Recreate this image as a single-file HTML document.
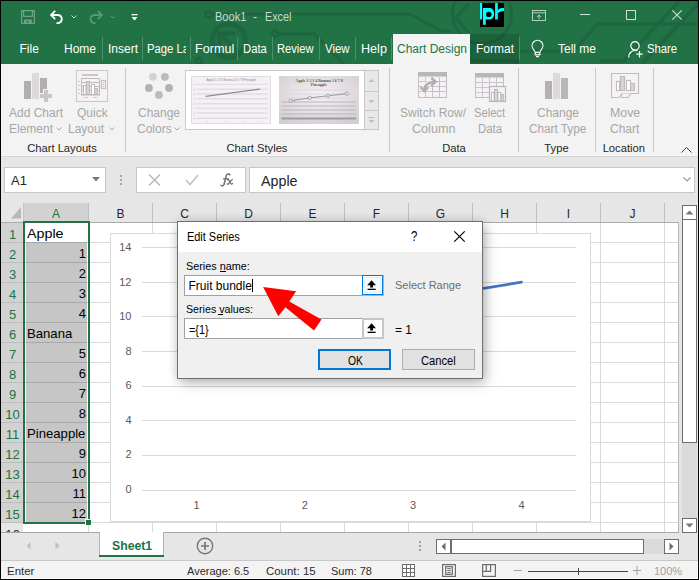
<!DOCTYPE html>
<html><head><meta charset="utf-8">
<style>
*{margin:0;padding:0;box-sizing:border-box}
html,body{width:699px;height:580px;overflow:hidden;background:#000;font-family:"Liberation Sans",sans-serif}
.a{position:absolute}
.t{position:absolute;white-space:nowrap;line-height:1}
svg{position:absolute;overflow:visible}
</style></head><body>
<div class="a" style="left:1px;top:1px;width:697px;height:63px;background:#217346;"></div>
<svg style="left:0px;top:0px" width="699" height="64" viewBox="0 0 699 64"><defs><clipPath id="tc"><rect x="1" y="1" width="697" height="63"/></clipPath></defs><g fill="none" stroke="#1e6640" stroke-width="3" clip-path="url(#tc)">
<circle cx="208.7" cy="14.3" r="3.3"/>
<path d="M212 14 H410 L441 31 H452"/>
<circle cx="228.8" cy="40.6" r="16.7" stroke-width="5"/>
<path d="M219.5 45 V33.5 H235" stroke-width="4"/>
<path d="M223 37 L241 55" stroke-width="4"/>
<circle cx="275" cy="34" r="3"/>
<path d="M278 34 H314 L344 64"/>
<circle cx="482" cy="14" r="29.5"/>
<path d="M468 4 L456 18 L468 32"/>
<path d="M699 24 H597 L574 51 H520"/>
<path d="M679.5 1 L623.5 61 H600" stroke-width="3.5"/>
<path d="M701 1 L641.5 64" stroke-width="4"/>
<circle cx="199" cy="61" r="3"/>
</g></svg>
<svg style="left:21px;top:10px" width="14" height="14" viewBox="0 0 14 14"><g fill="none" stroke="#6aa283" stroke-width="1.3"><rect x="0.65" y="0.65" width="12.7" height="12.7"/><path d="M2.6 1 V6.3 H11.4 V1"/></g><path d="M3 13.5 V9.5 H10.8 V13.5 H7.3 V11 H5.7 V13.5 Z" fill="#6aa283"/></svg>
<svg style="left:49px;top:9px" width="17" height="15" viewBox="0 0 17 15"><g fill="none" stroke="#fff" stroke-width="1.8"><path d="M2.5 6 H9.5 A4.2 4.2 0 0 1 9.5 14.2 H7.5"/><path d="M6.2 1.8 L2 6 L6.2 10.2"/></g></svg>
<svg style="left:71px;top:15px" width="6" height="4" viewBox="0 0 6 4"><path d="M0.5 0.5 L3 3 L5.5 0.5" fill="none" stroke="#c8dccf" stroke-width="1"/></svg>
<svg style="left:87px;top:9px" width="17" height="15" viewBox="0 0 17 15"><g fill="none" stroke="#5a9676" stroke-width="1.8"><path d="M14.5 6 H6.8 A4.2 4.2 0 0 0 6.8 14.2 H8.5"/><path d="M10.8 1.8 L15 6 L10.8 10.2"/></g></svg>
<svg style="left:110px;top:15px" width="6" height="4" viewBox="0 0 6 4"><path d="M0.5 0.5 L3 3 L5.5 0.5" fill="none" stroke="#5a9676" stroke-width="1"/></svg>
<svg style="left:131px;top:14px" width="7" height="7" viewBox="0 0 7 7"><rect x="0.5" y="0" width="6" height="1.3" fill="#fff"/><path d="M0.5 3 H6.5 L3.5 6.5 Z" fill="#fff"/></svg>
<div class="t" style="left:215px;top:11px;font-size:12px;color:#c5dacd;transform:scaleX(0.92);transform-origin:0 0;">Book1</div>
<div class="t" style="left:253px;top:11px;font-size:12px;color:#c5dacd;">-</div>
<div class="t" style="left:264.5px;top:11px;font-size:12px;color:#c5dacd;transform:scaleX(0.9);transform-origin:0 0;">Excel</div>
<svg style="left:480px;top:3px" width="24" height="24" viewBox="0 0 24 24"><defs><clipPath id="lc"><rect width="24" height="24"/></clipPath></defs>
<rect width="24" height="24" fill="#000"/>
<g fill="#00ffff" clip-path="url(#lc)"><rect x="0" y="0" width="2.2" height="16.5"/>
<path d="M3 5 H9.5 C12.5 5 14.1 7.5 14.1 10.8 C14.1 14.2 12.5 16.6 9.5 16.6 H5.8 V21.8 H3 Z M6.1 11.4 A2.7 2.6 0 1 0 11.5 11.4 A2.7 2.6 0 1 0 6.1 11.4 Z" fill-rule="evenodd"/>
<rect x="15.1" y="0" width="2.7" height="16.5"/>
<path d="M17.6 7.4 C19 5.6 21 5 23 5 L25 5 L25 8.2 C23 7.8 20 8.4 17.6 10.6 Z"/></g></svg>
<svg style="left:532px;top:10px" width="14" height="11" viewBox="0 0 14 11"><g fill="none" stroke="#b5cfbf" stroke-width="1"><rect x="0.5" y="0.5" width="13" height="10"/><path d="M0.5 2.8 H13.5"/><path d="M7 9 V5 M5 7 L7 5 L9 7"/></g></svg>
<div class="a" style="left:580px;top:14px;width:10px;height:1px;background:#cfe0d5;"></div>
<svg style="left:626px;top:10px" width="10" height="10" viewBox="0 0 10 10"><rect x="0.5" y="0.5" width="9" height="9" fill="none" stroke="#cfe0d5" stroke-width="1"/></svg>
<svg style="left:672px;top:10px" width="10" height="10" viewBox="0 0 10 10"><path d="M0.3 0.3 L9.7 9.7 M9.7 0.3 L0.3 9.7" fill="none" stroke="#cfe0d5" stroke-width="1.1"/></svg>
<div class="a" style="left:147px;top:43px;width:39px;height:16px;overflow:hidden"><div class="t" style="left:0;top:0;font-size:12px;color:#fff;transform:scaleX(0.94);transform-origin:0 0">Page La</div></div>
<div class="t" style="left:19.5px;top:43px;font-size:12px;color:#fff;">File</div>
<div class="t" style="left:64px;top:43px;font-size:12px;color:#fff;">Home</div>
<div class="t" style="left:108px;top:43px;font-size:12px;color:#fff;">Insert</div>
<div class="t" style="left:195px;top:43px;font-size:12px;color:#fff;transform:scaleX(1.05);transform-origin:0 0;">Formul</div>
<div class="t" style="left:243px;top:43px;font-size:12px;color:#fff;transform:scaleX(0.94);transform-origin:0 0;">Data</div>
<div class="t" style="left:277px;top:43px;font-size:12px;color:#fff;transform:scaleX(0.93);transform-origin:0 0;">Review</div>
<div class="t" style="left:325px;top:43px;font-size:12px;color:#fff;transform:scaleX(0.95);transform-origin:0 0;">View</div>
<div class="t" style="left:361px;top:43px;font-size:12px;color:#fff;transform:scaleX(1.05);transform-origin:0 0;">Help</div>
<div class="a" style="left:102px;top:37px;width:1px;height:23px;background:#4e8f6b;"></div>
<div class="a" style="left:142px;top:37px;width:1px;height:23px;background:#4e8f6b;"></div>
<div class="a" style="left:190px;top:37px;width:1px;height:23px;background:#4e8f6b;"></div>
<div class="a" style="left:237px;top:37px;width:1px;height:23px;background:#4e8f6b;"></div>
<div class="a" style="left:272px;top:37px;width:1px;height:23px;background:#4e8f6b;"></div>
<div class="a" style="left:319px;top:37px;width:1px;height:23px;background:#4e8f6b;"></div>
<div class="a" style="left:355px;top:37px;width:1px;height:23px;background:#4e8f6b;"></div>
<div class="a" style="left:391px;top:37px;width:1px;height:23px;background:#4e8f6b;"></div>
<div class="a" style="left:393px;top:34px;width:77px;height:30px;background:#f3f3f3;"></div>
<div class="t" style="left:397px;top:43px;font-size:12px;color:#217346;">Chart Design</div>
<div class="a" style="left:470px;top:34px;width:49px;height:30px;background:#1c633c;"></div>
<svg style="left:0px;top:0px" width="699" height="64" viewBox="0 0 699 64"><defs><clipPath id="fc"><rect x="470" y="34" width="49" height="30"/></clipPath></defs><g clip-path="url(#fc)" fill="none" stroke="#195935" stroke-width="3"><circle cx="482" cy="14" r="29.5"/><path d="M470 61 H519" stroke-width="4"/></g></svg>
<div class="t" style="left:476px;top:43px;font-size:12px;color:#fff;">Format</div>
<div class="a" style="left:519px;top:37px;width:1px;height:23px;background:#4e8f6b;"></div>
<svg style="left:531px;top:41px" width="13" height="17" viewBox="0 0 13 17"><g fill="none" stroke="#fff" stroke-width="1.2"><path d="M4 10.8 L2.2 8 A5.4 5.4 0 1 1 10.8 8 L9 10.8"/><rect x="4.2" y="11.3" width="4.6" height="2.5"/><path d="M5 15.6 H8"/></g></svg>
<div class="t" style="left:558px;top:43px;font-size:12px;color:#fff;">Tell me</div>
<svg style="left:628px;top:41px" width="16" height="17" viewBox="0 0 16 17"><g fill="none" stroke="#fff" stroke-width="1.2"><circle cx="7" cy="4.8" r="4.2"/><path d="M0.8 16.5 A6.5 6.5 0 0 1 9.5 9.8"/><path d="M11.5 10 V16.5 M8.3 13.2 H14.7"/></g></svg>
<div class="t" style="left:647px;top:43px;font-size:12px;color:#fff;transform:scaleX(0.94);transform-origin:0 0;">Share</div>
<div class="a" style="left:1px;top:64px;width:697px;height:92px;background:#f3f3f3;"></div>
<div class="a" style="left:1px;top:155px;width:697px;height:1px;background:#f6f6f6;"></div>
<svg style="left:24px;top:73px" width="30" height="30" viewBox="0 0 30 30"><rect x="0" y="8" width="7" height="18" fill="#b1afb1"/><rect x="8" y="0" width="7" height="26" fill="#dcd8dc"/>
<rect x="16" y="5" width="7" height="11" fill="#b1afb1"/><rect x="16" y="16" width="3" height="4" fill="#b1afb1"/>
<rect x="20" y="17" width="4" height="12" fill="#c6c6c6"/><rect x="16" y="21" width="12" height="4" fill="#c6c6c6"/></svg>
<div class="t" style="left:9px;top:107px;font-size:12px;color:#a6a6a6;">Add Chart</div>
<div class="t" style="left:9px;top:123px;font-size:12px;color:#a6a6a6;">Element</div>
<svg style="left:56px;top:127px" width="6" height="4" viewBox="0 0 6 4"><path d="M0.5 0.5 L3 3 L5.5 0.5" fill="none" stroke="#a6a6a6" stroke-width="1"/></svg>
<svg style="left:76px;top:70px" width="32" height="32" viewBox="0 0 32 32"><rect x="0.5" y="0.5" width="31" height="31" fill="#f5f1f5" stroke="#cbc7cb"/>
<rect x="6" y="4" width="16" height="2" fill="#c8c8c8"/>
<g fill="none" stroke="#bdb9bd" stroke-width="1"><path d="M5.5 8.5 H23.5 V24.5 H5.5 Z"/><path d="M5.5 12.5 H23.5 M5.5 16.5 H23.5 M5.5 20.5 H23.5"/></g>
<rect x="5" y="24" width="19" height="1.5" fill="#bdb9bd"/>
<rect x="7.5" y="15.5" width="2.5" height="9" fill="#fff" stroke="#bdb9bd"/>
<rect x="10.5" y="11.5" width="3" height="13" fill="#d6d2d6" stroke="#bdb9bd"/>
<rect x="15.5" y="14.5" width="3" height="10" fill="#fff" stroke="#bdb9bd"/>
<rect x="18.5" y="18.5" width="3" height="6" fill="#d6d2d6" stroke="#bdb9bd"/>
<rect x="25.5" y="10.5" width="4" height="8" fill="#f5f1f5" stroke="#c2bec2" stroke-width="1.2"/>
<g fill="#c2bec2"><rect x="27" y="12" width="1" height="1"/><rect x="27" y="14" width="1" height="1"/><rect x="27" y="16" width="1" height="1"/></g>
<g stroke="#cdc9cd"><path d="M2 11.5 H4 M2 15.5 H4 M2 19.5 H4 M2 23.5 H4 M8 27.5 H12 M17 27.5 H21"/></g></svg>
<div class="t" style="left:77px;top:107px;font-size:12px;color:#a6a6a6;">Quick</div>
<div class="t" style="left:68px;top:123px;font-size:12px;color:#a6a6a6;">Layout</div>
<svg style="left:108.5px;top:127px" width="6" height="4" viewBox="0 0 6 4"><path d="M0.5 0.5 L3 3 L5.5 0.5" fill="none" stroke="#a6a6a6" stroke-width="1"/></svg>
<div class="t" style="left:2.0px;width:120px;text-align:center;top:143px;font-size:11.2px;color:#262626;">Chart Layouts</div>
<div class="a" style="left:125px;top:68px;width:1px;height:84px;background:#c8c8c8;"></div>
<svg style="left:140px;top:68px" width="34" height="32" viewBox="0 0 34 32"><circle cx="12.9" cy="8.8" r="3.9" fill="#d4d0d4"/><circle cx="24.9" cy="8.8" r="3.9" fill="#bdbbbd"/>
<circle cx="8.9" cy="19.9" r="3.9" fill="#b2b0b2"/><circle cx="29" cy="19.9" r="3.9" fill="#b2b0b2"/>
<circle cx="18.9" cy="26.9" r="3.9" fill="#bdbbbd"/></svg>
<div class="t" style="left:138px;top:107px;font-size:12px;color:#a6a6a6;">Change</div>
<div class="t" style="left:137px;top:123px;font-size:12px;color:#a6a6a6;">Colors</div>
<svg style="left:174px;top:127px" width="6" height="4" viewBox="0 0 6 4"><path d="M0.5 0.5 L3 3 L5.5 0.5" fill="none" stroke="#a6a6a6" stroke-width="1"/></svg>
<div class="a" style="left:185px;top:70px;width:180px;height:60px;background:#fff;border:1px solid #c8c8c8;"></div>
<svg style="left:191px;top:76px" width="80" height="48" viewBox="0 0 80 48"><rect x="0.5" y="0.5" width="79" height="47" fill="#f5f0f5" stroke="#e2dce2"/>
<text x="15.6" y="5" font-size="3" font-family="Liberation Sans" fill="#8a848a" textLength="49.4" lengthAdjust="spacingAndGlyphs">Apple 1 2 3 4 Banana 5 6 7 8 Pineapple</text>
<g stroke="#e3dde3" stroke-width="1.4"><path d="M5.7 8.4 H77 M5.7 13.2 H77 M5.7 18 H77 M5.7 22.8 H77 M5.7 27.8 H77 M5.7 32.2 H77 M5.7 37 H77 M5.7 42.3 H77"/></g>
<g fill="#d8d2d8"><rect x="2.5" y="8" width="2" height="1"/><rect x="2.5" y="12.8" width="2" height="1"/><rect x="2.5" y="17.6" width="2" height="1"/><rect x="2.5" y="22.4" width="2" height="1"/><rect x="2.5" y="27.4" width="2" height="1"/><rect x="2.5" y="31.8" width="2" height="1"/><rect x="2.5" y="36.6" width="2" height="1"/><rect x="2.5" y="41.9" width="2" height="1"/>
<rect x="16" y="45" width="1" height="1"/><rect x="34" y="45" width="1" height="1"/><rect x="52" y="45" width="1" height="1"/><rect x="70" y="45" width="1" height="1"/></g>
<path d="M14.4 20.4 L69 13.1" stroke="#8c8c8c" stroke-width="1.3"/></svg>
<svg style="left:279px;top:76px" width="80" height="48" viewBox="0 0 80 48"><defs><radialGradient id="g2" cx="50%" cy="40%" r="70%"><stop offset="0" stop-color="#f5f2f5"/><stop offset="1" stop-color="#d2cdd2"/></radialGradient></defs>
<rect width="80" height="48" fill="url(#g2)"/>
<text x="16.6" y="6" font-size="3.6" font-family="Liberation Serif" font-weight="bold" fill="#5a555a" textLength="47" lengthAdjust="spacingAndGlyphs">Apple 1 2 3 4 Banana 5 6 7 8</text>
<text x="31.8" y="10" font-size="3.6" font-family="Liberation Serif" font-weight="bold" fill="#5a555a" textLength="16.2" lengthAdjust="spacingAndGlyphs">Pineapple</text>
<g stroke="#dcd7dc" stroke-width="1"><path d="M2.5 14 H77 M2.5 18.2 H77 M2.5 22.3 H77"/></g>
<g stroke="#bcb6bc" stroke-width="1.2"><path d="M2.5 26 H77 M2.5 30 H77 M2.5 34 H77 M2.5 38 H77"/></g>
<path d="M2.5 42.5 H77" stroke="#a09aa0" stroke-width="2"/>
<path d="M11.8 24.8 L30.7 21.8 L49 19.8 L67.9 17.6" stroke="#9a9a9a" stroke-width="1" fill="none"/>
<g fill="#f2f2f2" stroke="#8f8f8f" stroke-width="0.8"><circle cx="11.8" cy="24.8" r="1.6"/><circle cx="30.7" cy="21.8" r="1.6"/><circle cx="49" cy="19.8" r="1.6"/><circle cx="67.9" cy="17.6" r="1.6"/></g></svg>
<div class="a" style="left:364px;top:70px;width:15px;height:60px;background:#e8e8e8;border:1px solid #c8c8c8;"></div>
<div class="a" style="left:364px;top:91px;width:15px;height:1px;background:#c8c8c8;"></div>
<div class="a" style="left:364px;top:110px;width:15px;height:1px;background:#c8c8c8;"></div>
<svg style="left:364px;top:70px" width="15" height="60" viewBox="0 0 15 60"><path d="M4.5 12 L7.5 9 L10.5 12 Z" fill="#bdbdbd"/>
<path d="M4.5 30 L7.5 33 L10.5 30 Z" fill="#bdbdbd"/>
<path d="M4.5 47.5 H10.5" stroke="#bdbdbd"/><path d="M4.5 50 L7.5 53 L10.5 50 Z" fill="#bdbdbd"/></svg>
<div class="t" style="left:197.0px;width:120px;text-align:center;top:143px;font-size:11.2px;color:#262626;">Chart Styles</div>
<div class="a" style="left:389px;top:68px;width:1px;height:84px;background:#c8c8c8;"></div>
<svg style="left:418px;top:72px" width="30" height="27" viewBox="0 0 30 27"><rect x="0.5" y="0.5" width="28" height="25" fill="#f5f1f5" stroke="#c0bec0"/>
<rect x="0" y="0" width="29" height="4.5" fill="#b8b6b8"/>
<g stroke="#c8c6c8"><path d="M0.5 9.5 H28.5 M0.5 14.5 H28.5 M0.5 19.5 H28.5 M7.5 4.5 V25.5 M14.5 4.5 V25.5 M21.5 4.5 V25.5"/></g>
<rect x="14.5" y="9.5" width="7" height="10" fill="none" stroke="#bdbbbd"/>
<path d="M6.4 17.5 A10.1 7.8 0 0 1 16.5 9.7" fill="none" stroke="#f5f1f5" stroke-width="5"/>
<path d="M6.4 17.5 A10.1 7.8 0 0 1 16.5 9.7" fill="none" stroke="#b0aeb0" stroke-width="2.6"/>
<path d="M13.2 5.8 L17.6 9.7 L13.2 13.6" fill="none" stroke="#b0aeb0" stroke-width="2.4"/>
<path d="M2.6 15.2 L6.4 19 L10.2 15.2" fill="none" stroke="#b0aeb0" stroke-width="2.4"/></svg>
<div class="t" style="left:400px;top:107px;font-size:12px;color:#a6a6a6;">Switch Row/</div>
<div class="t" style="left:412px;top:123px;font-size:12px;color:#a6a6a6;transform:scaleX(1.05);transform-origin:0 0;">Column</div>
<svg style="left:475px;top:73px" width="31" height="29" viewBox="0 0 31 29"><rect x="0.5" y="0.5" width="28" height="24" fill="#f5f1f5" stroke="#c0bec0"/>
<rect x="0" y="0" width="29" height="4.5" fill="#b8b6b8"/>
<g stroke="#c8c6c8"><path d="M0.5 9.5 H28.5 M0.5 14.5 H28.5 M0.5 19.5 H28.5 M7.5 4.5 V24.5 M14.5 4.5 V24.5 M21.5 4.5 V24.5"/></g>
<rect x="14.5" y="13.5" width="16" height="15" fill="#f5f1f5" stroke="#b8b6b8" stroke-width="1.2"/>
<rect x="16.5" y="19.5" width="2.5" height="8.5" fill="#fff" stroke="#b8b6b8" stroke-width="0.9"/>
<rect x="19.5" y="16.5" width="3" height="11.5" fill="#d8d4d8" stroke="#b8b6b8" stroke-width="0.9"/>
<rect x="23" y="19.5" width="2.6" height="8.5" fill="#fff" stroke="#b8b6b8" stroke-width="0.9"/>
<rect x="26" y="21.5" width="2.6" height="6.5" fill="#d8d4d8" stroke="#b8b6b8" stroke-width="0.9"/></svg>
<div class="t" style="left:474px;top:107px;font-size:12px;color:#a6a6a6;transform:scaleX(0.93);transform-origin:0 0;">Select</div>
<div class="t" style="left:478px;top:123px;font-size:12px;color:#a6a6a6;transform:scaleX(0.95);transform-origin:0 0;">Data</div>
<div class="t" style="left:394.0px;width:120px;text-align:center;top:143px;font-size:11.2px;color:#262626;">Data</div>
<div class="a" style="left:518px;top:68px;width:1px;height:84px;background:#c8c8c8;"></div>
<svg style="left:545px;top:73px" width="24" height="26" viewBox="0 0 24 26"><rect x="0" y="8" width="7" height="18" fill="#b3b1b3"/><rect x="8" y="0" width="7" height="26" fill="#dcd8dc"/><rect x="16" y="5" width="7" height="21" fill="#b8b6b8"/></svg>
<div class="t" style="left:537px;top:107px;font-size:12px;color:#a6a6a6;">Change</div>
<div class="t" style="left:529px;top:123px;font-size:12px;color:#a6a6a6;transform:scaleX(0.98);transform-origin:0 0;">Chart Type</div>
<div class="t" style="left:496.5px;width:120px;text-align:center;top:143px;font-size:11.2px;color:#262626;">Type</div>
<div class="a" style="left:595px;top:68px;width:1px;height:84px;background:#c8c8c8;"></div>
<svg style="left:611px;top:73px" width="29" height="26" viewBox="0 0 29 26"><path d="M0.5 0.5 H27.5 V20.5 H11 L8.2 24.5 H0.5 Z" fill="#f5f1f5" stroke="#c0bec0" stroke-width="1.1"/>
<path d="M11 20.5 L10.5 24.5 H17 L20 20.5" fill="#f5f1f5" stroke="#c0bec0" stroke-width="1.1"/>
<rect x="5.5" y="8.5" width="3" height="9" fill="#fff" stroke="#bdb9bd" stroke-width="1.1"/>
<rect x="9.5" y="3.5" width="4" height="14" fill="#d8d4d8" stroke="#bdb9bd" stroke-width="1.1"/>
<rect x="15.5" y="7.5" width="4" height="10" fill="#fff" stroke="#bdb9bd" stroke-width="1.1"/>
<rect x="19.5" y="10.5" width="4" height="7" fill="#d8d4d8" stroke="#bdb9bd" stroke-width="1.1"/></svg>
<div class="t" style="left:610px;top:107px;font-size:12px;color:#a6a6a6;transform:scaleX(1.03);transform-origin:0 0;">Move</div>
<div class="t" style="left:610px;top:123px;font-size:12px;color:#a6a6a6;">Chart</div>
<div class="t" style="left:563.8px;width:120px;text-align:center;top:143px;font-size:11.2px;color:#262626;">Location</div>
<div class="a" style="left:653px;top:68px;width:1px;height:84px;background:#c8c8c8;"></div>
<svg style="left:681px;top:147px" width="11" height="6" viewBox="0 0 11 6"><path d="M0.5 5.5 L5.5 0.5 L10.5 5.5" fill="none" stroke="#444" stroke-width="1"/></svg>
<div class="a" style="left:1px;top:157px;width:697px;height:46px;background:#e6e6e6;"></div>
<div class="a" style="left:1px;top:156px;width:697px;height:1px;background:#d4d4d4;"></div>
<div class="a" style="left:4px;top:167px;width:102px;height:26px;background:#fff;border:1px solid #c6c6c6;"></div>
<div class="t" style="left:11px;top:174px;font-size:13px;color:#262626;">A1</div>
<svg style="left:92px;top:177px" width="8" height="5" viewBox="0 0 8 5"><path d="M0 0 H8 L4 4.5 Z" fill="#777"/></svg>
<svg style="left:120px;top:175px" width="2" height="10" viewBox="0 0 2 10"><g fill="#a8a8a8"><rect x="0" y="0" width="2" height="2"/><rect x="0" y="4" width="2" height="2"/><rect x="0" y="8" width="2" height="2"/></g></svg>
<div class="a" style="left:136px;top:167px;width:110px;height:26px;background:#fff;border:1px solid #c6c6c6;"></div>
<svg style="left:148px;top:174px" width="13" height="12" viewBox="0 0 13 12"><path d="M1 0.5 L12 11.5 M12 0.5 L1 11.5" stroke="#b4b4b4" stroke-width="1.3"/></svg>
<svg style="left:185px;top:174px" width="14" height="12" viewBox="0 0 14 12"><path d="M1 6 L5 10.5 L13 1" fill="none" stroke="#c2c2c2" stroke-width="1.6"/></svg>
<svg style="left:219px;top:172px" width="16" height="16" viewBox="0 0 16 16"><g fill="none" stroke="#707070" stroke-linecap="round"><path d="M11 2.8 C10 1.6 7.6 1.5 7 4.5 L5 12.5 C4.5 14 3 14.3 2 13.3" stroke-width="1.5"/><path d="M4.3 6.8 H9.5" stroke-width="1.2"/><path d="M8.5 7.5 C9.5 7.3 10 8 10.5 9 L11.8 11.5 C12.3 12.3 12.8 12.3 13.5 11.5" stroke-width="1.3"/><path d="M13.3 7.5 C12.5 7.8 11 10 9.5 11.8 C9 12.3 8.5 12.3 8 12" stroke-width="1.3"/></g></svg>
<div class="a" style="left:249px;top:167px;width:446px;height:26px;background:#fff;border:1px solid #c6c6c6;"></div>
<div class="t" style="left:261px;top:174px;font-size:14px;color:#262626;transform:scaleX(1.02);transform-origin:0 0;">Apple</div>
<svg style="left:683px;top:177px" width="8" height="5" viewBox="0 0 8 5"><path d="M0.5 0.5 L4 4 L7.5 0.5" fill="none" stroke="#999" stroke-width="1.2"/></svg>
<div class="a" style="left:1px;top:203px;width:697px;height:330px;background:#fff;"></div>
<div class="a" style="left:1px;top:203px;width:678px;height:19px;background:#e6e6e6;"></div>
<div class="a" style="left:24px;top:203px;width:64px;height:18px;background:#d2d2d2;"></div>
<div class="a" style="left:1px;top:222px;width:678px;height:1px;background:#ababab;"></div>
<svg style="left:11px;top:207px" width="11" height="12" viewBox="0 0 11 12"><path d="M10 0 V11.5 H0 Z" fill="#b8b8b8"/></svg>
<div class="a" style="left:23px;top:203px;width:1px;height:19px;background:#c6c6c6;"></div>
<div class="a" style="left:88px;top:203px;width:1px;height:19px;background:#c0c0c0;"></div>
<div class="t" style="left:36.0px;width:40px;text-align:center;top:208px;font-size:12px;color:#217346;">A</div>
<div class="a" style="left:152px;top:203px;width:1px;height:19px;background:#c0c0c0;"></div>
<div class="t" style="left:100.5px;width:40px;text-align:center;top:208px;font-size:12px;color:#262626;">B</div>
<div class="a" style="left:216px;top:203px;width:1px;height:19px;background:#c0c0c0;"></div>
<div class="t" style="left:164.5px;width:40px;text-align:center;top:208px;font-size:12px;color:#262626;">C</div>
<div class="a" style="left:280px;top:203px;width:1px;height:19px;background:#c0c0c0;"></div>
<div class="t" style="left:228.5px;width:40px;text-align:center;top:208px;font-size:12px;color:#262626;">D</div>
<div class="a" style="left:344px;top:203px;width:1px;height:19px;background:#c0c0c0;"></div>
<div class="t" style="left:292.5px;width:40px;text-align:center;top:208px;font-size:12px;color:#262626;">E</div>
<div class="a" style="left:408px;top:203px;width:1px;height:19px;background:#c0c0c0;"></div>
<div class="t" style="left:356.5px;width:40px;text-align:center;top:208px;font-size:12px;color:#262626;">F</div>
<div class="a" style="left:472px;top:203px;width:1px;height:19px;background:#c0c0c0;"></div>
<div class="t" style="left:420.5px;width:40px;text-align:center;top:208px;font-size:12px;color:#262626;">G</div>
<div class="a" style="left:536px;top:203px;width:1px;height:19px;background:#c0c0c0;"></div>
<div class="t" style="left:484.5px;width:40px;text-align:center;top:208px;font-size:12px;color:#262626;">H</div>
<div class="a" style="left:600px;top:203px;width:1px;height:19px;background:#c0c0c0;"></div>
<div class="t" style="left:548.5px;width:40px;text-align:center;top:208px;font-size:12px;color:#262626;">I</div>
<div class="a" style="left:664px;top:203px;width:1px;height:19px;background:#c0c0c0;"></div>
<div class="t" style="left:612.5px;width:40px;text-align:center;top:208px;font-size:12px;color:#262626;">J</div>
<div class="a" style="left:1px;top:223px;width:22px;height:310px;background:#e6e6e6;"></div>
<div class="a" style="left:1px;top:223px;width:22px;height:300px;background:#d2d2d2;"></div>
<div class="a" style="left:1px;top:242px;width:22px;height:1px;background:#bdbdbd;"></div>
<div class="t" style="left:-2.5px;width:30px;text-align:center;top:228px;font-size:13px;color:#217346;">1</div>
<div class="a" style="left:1px;top:262px;width:22px;height:1px;background:#bdbdbd;"></div>
<div class="t" style="left:-2.5px;width:30px;text-align:center;top:248px;font-size:13px;color:#217346;">2</div>
<div class="a" style="left:1px;top:282px;width:22px;height:1px;background:#bdbdbd;"></div>
<div class="t" style="left:-2.5px;width:30px;text-align:center;top:268px;font-size:13px;color:#217346;">3</div>
<div class="a" style="left:1px;top:302px;width:22px;height:1px;background:#bdbdbd;"></div>
<div class="t" style="left:-2.5px;width:30px;text-align:center;top:288px;font-size:13px;color:#217346;">4</div>
<div class="a" style="left:1px;top:322px;width:22px;height:1px;background:#bdbdbd;"></div>
<div class="t" style="left:-2.5px;width:30px;text-align:center;top:308px;font-size:13px;color:#217346;">5</div>
<div class="a" style="left:1px;top:342px;width:22px;height:1px;background:#bdbdbd;"></div>
<div class="t" style="left:-2.5px;width:30px;text-align:center;top:328px;font-size:13px;color:#217346;">6</div>
<div class="a" style="left:1px;top:362px;width:22px;height:1px;background:#bdbdbd;"></div>
<div class="t" style="left:-2.5px;width:30px;text-align:center;top:348px;font-size:13px;color:#217346;">7</div>
<div class="a" style="left:1px;top:382px;width:22px;height:1px;background:#bdbdbd;"></div>
<div class="t" style="left:-2.5px;width:30px;text-align:center;top:368px;font-size:13px;color:#217346;">8</div>
<div class="a" style="left:1px;top:402px;width:22px;height:1px;background:#bdbdbd;"></div>
<div class="t" style="left:-2.5px;width:30px;text-align:center;top:388px;font-size:13px;color:#217346;">9</div>
<div class="a" style="left:1px;top:422px;width:22px;height:1px;background:#bdbdbd;"></div>
<div class="t" style="left:-2.5px;width:30px;text-align:center;top:408px;font-size:13px;color:#217346;">10</div>
<div class="a" style="left:1px;top:442px;width:22px;height:1px;background:#bdbdbd;"></div>
<div class="t" style="left:-2.5px;width:30px;text-align:center;top:428px;font-size:13px;color:#217346;">11</div>
<div class="a" style="left:1px;top:462px;width:22px;height:1px;background:#bdbdbd;"></div>
<div class="t" style="left:-2.5px;width:30px;text-align:center;top:448px;font-size:13px;color:#217346;">12</div>
<div class="a" style="left:1px;top:482px;width:22px;height:1px;background:#bdbdbd;"></div>
<div class="t" style="left:-2.5px;width:30px;text-align:center;top:468px;font-size:13px;color:#217346;">13</div>
<div class="a" style="left:1px;top:502px;width:22px;height:1px;background:#bdbdbd;"></div>
<div class="t" style="left:-2.5px;width:30px;text-align:center;top:488px;font-size:13px;color:#217346;">14</div>
<div class="a" style="left:1px;top:522px;width:22px;height:1px;background:#bdbdbd;"></div>
<div class="t" style="left:-2.5px;width:30px;text-align:center;top:508px;font-size:13px;color:#217346;">15</div>
<div class="a" style="left:1px;top:542px;width:22px;height:1px;background:#bdbdbd;"></div>
<div class="t" style="left:-2.5px;width:30px;text-align:center;top:528px;font-size:13px;color:#262626;">16</div>
<div class="a" style="left:24px;top:242px;width:654px;height:1px;background:#dadada;"></div>
<div class="a" style="left:24px;top:262px;width:654px;height:1px;background:#dadada;"></div>
<div class="a" style="left:24px;top:282px;width:654px;height:1px;background:#dadada;"></div>
<div class="a" style="left:24px;top:302px;width:654px;height:1px;background:#dadada;"></div>
<div class="a" style="left:24px;top:322px;width:654px;height:1px;background:#dadada;"></div>
<div class="a" style="left:24px;top:342px;width:654px;height:1px;background:#dadada;"></div>
<div class="a" style="left:24px;top:362px;width:654px;height:1px;background:#dadada;"></div>
<div class="a" style="left:24px;top:382px;width:654px;height:1px;background:#dadada;"></div>
<div class="a" style="left:24px;top:402px;width:654px;height:1px;background:#dadada;"></div>
<div class="a" style="left:24px;top:422px;width:654px;height:1px;background:#dadada;"></div>
<div class="a" style="left:24px;top:442px;width:654px;height:1px;background:#dadada;"></div>
<div class="a" style="left:24px;top:462px;width:654px;height:1px;background:#dadada;"></div>
<div class="a" style="left:24px;top:482px;width:654px;height:1px;background:#dadada;"></div>
<div class="a" style="left:24px;top:502px;width:654px;height:1px;background:#dadada;"></div>
<div class="a" style="left:24px;top:522px;width:654px;height:1px;background:#dadada;"></div>
<div class="a" style="left:24px;top:542px;width:654px;height:1px;background:#dadada;"></div>
<div class="a" style="left:88px;top:223px;width:1px;height:310px;background:#dadada;"></div>
<div class="a" style="left:152px;top:223px;width:1px;height:310px;background:#dadada;"></div>
<div class="a" style="left:216px;top:223px;width:1px;height:310px;background:#dadada;"></div>
<div class="a" style="left:280px;top:223px;width:1px;height:310px;background:#dadada;"></div>
<div class="a" style="left:344px;top:223px;width:1px;height:310px;background:#dadada;"></div>
<div class="a" style="left:408px;top:223px;width:1px;height:310px;background:#dadada;"></div>
<div class="a" style="left:472px;top:223px;width:1px;height:310px;background:#dadada;"></div>
<div class="a" style="left:536px;top:223px;width:1px;height:310px;background:#dadada;"></div>
<div class="a" style="left:600px;top:223px;width:1px;height:310px;background:#dadada;"></div>
<div class="a" style="left:664px;top:223px;width:1px;height:310px;background:#dadada;"></div>
<div class="a" style="left:26px;top:242px;width:61px;height:1px;background:#a8a8a8;"></div>
<div class="a" style="left:26px;top:243px;width:61px;height:19px;background:#c6c6c6;"></div>
<div class="a" style="left:26px;top:262px;width:61px;height:1px;background:#a8a8a8;"></div>
<div class="a" style="left:26px;top:263px;width:61px;height:19px;background:#c6c6c6;"></div>
<div class="a" style="left:26px;top:282px;width:61px;height:1px;background:#a8a8a8;"></div>
<div class="a" style="left:26px;top:283px;width:61px;height:19px;background:#c6c6c6;"></div>
<div class="a" style="left:26px;top:302px;width:61px;height:1px;background:#a8a8a8;"></div>
<div class="a" style="left:26px;top:303px;width:61px;height:19px;background:#c6c6c6;"></div>
<div class="a" style="left:26px;top:322px;width:61px;height:1px;background:#a8a8a8;"></div>
<div class="a" style="left:26px;top:323px;width:61px;height:19px;background:#c6c6c6;"></div>
<div class="a" style="left:26px;top:342px;width:61px;height:1px;background:#a8a8a8;"></div>
<div class="a" style="left:26px;top:343px;width:61px;height:19px;background:#c6c6c6;"></div>
<div class="a" style="left:26px;top:362px;width:61px;height:1px;background:#a8a8a8;"></div>
<div class="a" style="left:26px;top:363px;width:61px;height:19px;background:#c6c6c6;"></div>
<div class="a" style="left:26px;top:382px;width:61px;height:1px;background:#a8a8a8;"></div>
<div class="a" style="left:26px;top:383px;width:61px;height:19px;background:#c6c6c6;"></div>
<div class="a" style="left:26px;top:402px;width:61px;height:1px;background:#a8a8a8;"></div>
<div class="a" style="left:26px;top:403px;width:61px;height:19px;background:#c6c6c6;"></div>
<div class="a" style="left:26px;top:422px;width:61px;height:1px;background:#a8a8a8;"></div>
<div class="a" style="left:26px;top:423px;width:61px;height:19px;background:#c6c6c6;"></div>
<div class="a" style="left:26px;top:442px;width:61px;height:1px;background:#a8a8a8;"></div>
<div class="a" style="left:26px;top:443px;width:61px;height:19px;background:#c6c6c6;"></div>
<div class="a" style="left:26px;top:462px;width:61px;height:1px;background:#a8a8a8;"></div>
<div class="a" style="left:26px;top:463px;width:61px;height:19px;background:#c6c6c6;"></div>
<div class="a" style="left:26px;top:482px;width:61px;height:1px;background:#a8a8a8;"></div>
<div class="a" style="left:26px;top:483px;width:61px;height:19px;background:#c6c6c6;"></div>
<div class="a" style="left:26px;top:502px;width:61px;height:1px;background:#a8a8a8;"></div>
<div class="a" style="left:26px;top:503px;width:61px;height:19px;background:#c6c6c6;"></div>
<div class="a" style="left:25px;top:223px;width:62px;height:19px;overflow:hidden"><div class="t" style="left:2px;top:4px;font-size:13px;color:#000;transform:scaleX(1.1);transform-origin:0 0">Apple</div></div>
<div class="t" style="left:6px;width:80px;text-align:right;top:247px;font-size:13px;color:#000;">1</div>
<div class="t" style="left:6px;width:80px;text-align:right;top:267px;font-size:13px;color:#000;">2</div>
<div class="t" style="left:6px;width:80px;text-align:right;top:287px;font-size:13px;color:#000;">3</div>
<div class="t" style="left:6px;width:80px;text-align:right;top:307px;font-size:13px;color:#000;">4</div>
<div class="a" style="left:25px;top:323px;width:62px;height:19px;overflow:hidden"><div class="t" style="left:2px;top:4px;font-size:13px;color:#000;transform:scaleX(1.01);transform-origin:0 0">Banana</div></div>
<div class="t" style="left:6px;width:80px;text-align:right;top:347px;font-size:13px;color:#000;">5</div>
<div class="t" style="left:6px;width:80px;text-align:right;top:367px;font-size:13px;color:#000;">6</div>
<div class="t" style="left:6px;width:80px;text-align:right;top:387px;font-size:13px;color:#000;">7</div>
<div class="t" style="left:6px;width:80px;text-align:right;top:407px;font-size:13px;color:#000;">8</div>
<div class="a" style="left:25px;top:423px;width:62px;height:19px;overflow:hidden"><div class="t" style="left:2px;top:4px;font-size:13px;color:#000;transform:scaleX(1.01);transform-origin:0 0">Pineapple</div></div>
<div class="t" style="left:6px;width:80px;text-align:right;top:447px;font-size:13px;color:#000;">9</div>
<div class="t" style="left:6px;width:80px;text-align:right;top:467px;font-size:13px;color:#000;">10</div>
<div class="t" style="left:6px;width:80px;text-align:right;top:487px;font-size:13px;color:#000;">11</div>
<div class="t" style="left:6px;width:80px;text-align:right;top:507px;font-size:13px;color:#000;">12</div>
<div class="a" style="left:23px;top:221px;width:67px;height:303px;background:transparent;border:2px solid #217346;"></div>
<div class="a" style="left:86px;top:520px;width:5px;height:5px;background:#217346;"></div>
<div class="a" style="left:85px;top:519px;width:7px;height:1px;background:#fff;"></div>
<div class="a" style="left:85px;top:519px;width:1px;height:7px;background:#fff;"></div>
<div class="a" style="left:678px;top:203px;width:20px;height:330px;background:#e6e6e6;"></div>
<div class="a" style="left:678px;top:222px;width:1px;height:311px;background:#b4b4b4;"></div>
<div class="a" style="left:682px;top:205px;width:15px;height:15px;background:#fff;border:1px solid #6d6d6d;"></div>
<svg style="left:682px;top:205px" width="15" height="15" viewBox="0 0 15 15"><path d="M3.5 9.5 L7.5 5.5 L11.5 9.5 Z" fill="#777"/></svg>
<div class="a" style="left:682px;top:220px;width:15px;height:299px;background:#dadada;"></div>
<div class="a" style="left:682px;top:219px;width:15px;height:224px;background:#fff;border:1px solid #6d6d6d;"></div>
<div class="a" style="left:682px;top:518px;width:15px;height:15px;background:#fff;border:1px solid #6d6d6d;"></div>
<svg style="left:682px;top:518px" width="15" height="15" viewBox="0 0 15 15"><path d="M3.5 5.5 L7.5 9.5 L11.5 5.5 Z" fill="#777"/></svg>
<div class="a" style="left:110px;top:233px;width:481px;height:289px;background:#fff;border:1px solid #d9d9d9;"></div>
<div class="a" style="left:142px;top:247px;width:434px;height:1px;background:#d9d9d9;"></div>
<div class="t" style="left:101.5px;width:30px;text-align:right;top:242px;font-size:11px;color:#595959;">14</div>
<div class="a" style="left:142px;top:282px;width:434px;height:1px;background:#d9d9d9;"></div>
<div class="t" style="left:101.5px;width:30px;text-align:right;top:277px;font-size:11px;color:#595959;">12</div>
<div class="a" style="left:142px;top:316px;width:434px;height:1px;background:#d9d9d9;"></div>
<div class="t" style="left:101.5px;width:30px;text-align:right;top:311px;font-size:11px;color:#595959;">10</div>
<div class="a" style="left:142px;top:351px;width:434px;height:1px;background:#d9d9d9;"></div>
<div class="t" style="left:101.5px;width:30px;text-align:right;top:346px;font-size:11px;color:#595959;">8</div>
<div class="a" style="left:142px;top:386px;width:434px;height:1px;background:#d9d9d9;"></div>
<div class="t" style="left:101.5px;width:30px;text-align:right;top:380px;font-size:11px;color:#595959;">6</div>
<div class="a" style="left:142px;top:420px;width:434px;height:1px;background:#d9d9d9;"></div>
<div class="t" style="left:101.5px;width:30px;text-align:right;top:415px;font-size:11px;color:#595959;">4</div>
<div class="a" style="left:142px;top:455px;width:434px;height:1px;background:#d9d9d9;"></div>
<div class="t" style="left:101.5px;width:30px;text-align:right;top:449px;font-size:11px;color:#595959;">2</div>
<div class="a" style="left:142px;top:490px;width:434px;height:1px;background:#d9d9d9;"></div>
<div class="t" style="left:101.5px;width:30px;text-align:right;top:484px;font-size:11px;color:#595959;">0</div>
<div class="t" style="left:186.55px;width:20px;text-align:center;top:500px;font-size:11px;color:#595959;">1</div>
<div class="t" style="left:294.85px;width:20px;text-align:center;top:500px;font-size:11px;color:#595959;">2</div>
<div class="t" style="left:403.15px;width:20px;text-align:center;top:500px;font-size:11px;color:#595959;">3</div>
<div class="t" style="left:511.45000000000005px;width:20px;text-align:center;top:500px;font-size:11px;color:#595959;">4</div>
<svg style="left:0px;top:0px" width="699" height="580" viewBox="0 0 699 580"><path d="M196.5 334.3 L304.9 317 L413.2 299.6 L521.5 282.2" fill="none" stroke="#4472c4" stroke-width="2.8" stroke-linecap="round"/></svg>
<div class="a" style="left:178px;top:222px;width:304px;height:156px;box-shadow:0 1px 10px rgba(0,0,0,0.16), 3px 4px 12px 1px rgba(0,0,0,0.24)"></div>
<div class="a" style="left:177px;top:221px;width:306px;height:158px;background:#f0f0f0;border:1px solid #6f6f6f;"></div>
<div class="a" style="left:178px;top:222px;width:304px;height:30px;background:#fff;"></div>
<div class="t" style="left:186.5px;top:231px;font-size:12px;color:#000;transform:scaleX(0.91);transform-origin:0 0;">Edit Series</div>
<div class="t" style="left:411px;top:229px;font-size:14px;color:#000;transform:scaleX(0.82);transform-origin:0 0;">?</div>
<svg style="left:454px;top:231px" width="11" height="11" viewBox="0 0 11 11"><path d="M0.3 0.3 L10.7 10.7 M10.7 0.3 L0.3 10.7" stroke="#000" stroke-width="1.2"/></svg>
<div class="t" style="left:186px;top:261px;font-size:11px;color:#000;transform:scaleX(0.985);transform-origin:0 0;">Series name:</div>
<div class="a" style="left:220px;top:271px;width:6px;height:1px;background:#000;"></div>
<div class="a" style="left:184px;top:275px;width:200px;height:21px;background:#fff;border:1px solid #a0a0a0;"></div>
<div class="t" style="left:188.5px;top:280px;font-size:12px;color:#000;">Fruit bundle</div>
<div class="a" style="left:252px;top:279px;width:1px;height:13px;background:#000;"></div>
<div class="a" style="left:362px;top:275px;width:22px;height:21px;background:#fff;border:1px solid #b4b4b4;"></div>
<div class="a" style="left:362px;top:275px;width:21px;height:20px;background:transparent;border:1.3px solid #0078d7;"></div>
<div class="a" style="left:364px;top:277px;width:17px;height:16px;background:#f5f9fd;border:1px solid #e6eef8;"></div>
<svg style="left:367px;top:280px" width="10" height="11" viewBox="0 0 10 11"><path d="M4.6 0.3 L9 5.3 H6 V7.6 H3.2 V5.3 H0.2 Z" fill="#000"/><rect x="0.6" y="8.7" width="8" height="1.3" fill="#000"/></svg>
<div class="t" style="left:395px;top:280px;font-size:11px;color:#6d6d6d;">Select Range</div>
<div class="t" style="left:186px;top:304px;font-size:11px;color:#000;transform:scaleX(0.97);transform-origin:0 0;">Series values:</div>
<div class="a" style="left:218px;top:314px;width:5px;height:1px;background:#000;"></div>
<div class="a" style="left:184px;top:318px;width:200px;height:21px;background:#fff;border:1px solid #a0a0a0;"></div>
<div class="t" style="left:188.5px;top:323.5px;font-size:12px;color:#000;transform:scaleX(0.9);transform-origin:0 0;">={1}</div>
<div class="a" style="left:362px;top:318px;width:22px;height:21px;background:#fdfdfd;border:2px solid #c6c6c6;"></div>
<svg style="left:367px;top:323px" width="10" height="11" viewBox="0 0 10 11"><path d="M4.6 0.3 L9 5.3 H6 V7.6 H3.2 V5.3 H0.2 Z" fill="#000"/><rect x="0.6" y="8.7" width="8" height="1.3" fill="#000"/></svg>
<div class="t" style="left:395px;top:323.5px;font-size:12px;color:#000;">= 1</div>
<div class="a" style="left:318px;top:349px;width:73px;height:21px;background:#e1e1e1;border:2px solid #0078d7;"></div>
<div class="t" style="left:347.5px;top:354.5px;font-size:12px;color:#000;transform:scaleX(0.86);transform-origin:0 0;">OK</div>
<div class="a" style="left:402px;top:349px;width:73px;height:21px;background:#e1e1e1;border:1px solid #adadad;"></div>
<div class="t" style="left:421px;top:354.5px;font-size:12px;color:#000;transform:scaleX(0.93);transform-origin:0 0;">Cancel</div>
<svg style="left:0px;top:0px" width="699" height="580" viewBox="0 0 699 580"><path d="M263.1 287 L296.1 291.2 L289.3 301.5 L321.5 319.6 L314 330.5 L285.4 307.3 L278.3 316.3 Z" fill="#ff0000"/></svg>
<div class="a" style="left:1px;top:533px;width:697px;height:28px;background:#e6e6e6;"></div>
<div class="a" style="left:1px;top:532px;width:678px;height:1px;background:#a6a6a6;"></div>
<svg style="left:25.5px;top:541.5px" width="40" height="8" viewBox="0 0 40 8"><path d="M4.5 0 V7.5 L0.5 3.75 Z M29.5 0 V7.5 L33.8 3.75 Z" fill="#c0c0c0"/></svg>
<div class="a" style="left:99px;top:532px;width:65px;height:25px;background:#fff;border-left:1px solid #b4b4b4;border-right:1px solid #b4b4b4"></div>
<div class="a" style="left:99px;top:555px;width:65px;height:2px;background:#217346;"></div>
<div class="t" style="left:111.5px;top:540px;font-size:12.5px;color:#217346;transform:scaleX(0.98);transform-origin:0 0;font-weight:bold">Sheet1</div>
<svg style="left:196px;top:537px" width="18" height="18" viewBox="0 0 18 18"><circle cx="9" cy="9" r="7.7" fill="none" stroke="#777" stroke-width="1.4"/><path d="M9 5 V13 M5 9 H13" stroke="#777" stroke-width="1.7"/></svg>
<svg style="left:419px;top:541px" width="2" height="10" viewBox="0 0 2 10"><g fill="#a0a0a0"><rect x="0" y="0" width="2" height="2"/><rect x="0" y="4" width="2" height="2"/><rect x="0" y="8" width="2" height="2"/></g></svg>
<div class="a" style="left:436px;top:539px;width:15px;height:15px;background:#fff;border:1px solid #6d6d6d;"></div>
<svg style="left:436px;top:539px" width="15" height="15" viewBox="0 0 15 15"><path d="M9.5 3.5 L5.5 7.5 L9.5 11.5 Z" fill="#6d6d6d"/></svg>
<div class="a" style="left:451px;top:539px;width:213px;height:15px;background:#dadada;"></div>
<div class="a" style="left:450px;top:539px;width:194px;height:15px;background:#fff;border:1px solid #6d6d6d;"></div>
<div class="a" style="left:450px;top:539px;width:2px;height:15px;background:#6d6d6d;"></div>
<div class="a" style="left:664px;top:539px;width:15px;height:15px;background:#fff;border:1px solid #6d6d6d;"></div>
<svg style="left:664px;top:539px" width="15" height="15" viewBox="0 0 15 15"><path d="M5.5 3.5 L9.5 7.5 L5.5 11.5 Z" fill="#6d6d6d"/></svg>
<div class="a" style="left:1px;top:561px;width:697px;height:18px;background:#f3f3f3;"></div>
<div class="a" style="left:1px;top:560px;width:697px;height:1px;background:#c8c8c8;"></div>
<div class="a" style="left:697px;top:561px;width:1px;height:18px;background:#fff;"></div>
<div class="a" style="left:1px;top:578px;width:697px;height:1px;background:#fff;"></div>
<div class="t" style="left:7px;top:566px;font-size:11px;color:#2b2b2b;transform:scaleX(1.04);transform-origin:0 0;">Enter</div>
<div class="t" style="left:187px;top:566px;font-size:11px;color:#2b2b2b;">Average: 6.5</div>
<div class="t" style="left:265.5px;top:566px;font-size:11px;color:#2b2b2b;transform:scaleX(1.04);transform-origin:0 0;">Count: 15</div>
<div class="t" style="left:331px;top:566px;font-size:11px;color:#2b2b2b;">Sum: 78</div>
<svg style="left:402px;top:564px" width="13" height="13" viewBox="0 0 13 13"><rect width="13" height="13" fill="#6d6d6d"/><g fill="#fdfdfd"><rect x="1" y="1" width="3" height="3"/><rect x="5" y="1" width="3" height="3"/><rect x="9" y="1" width="3" height="3"/><rect x="1" y="5" width="3" height="3"/><rect x="5" y="5" width="3" height="3"/><rect x="9" y="5" width="3" height="3"/><rect x="1" y="9" width="3" height="3"/><rect x="5" y="9" width="3" height="3"/><rect x="9" y="9" width="3" height="3"/></g></svg>
<svg style="left:442px;top:564px" width="14" height="13" viewBox="0 0 14 13"><g fill="none" stroke="#6d6d6d" stroke-width="1.2"><rect x="0.6" y="0.6" width="12.8" height="11.8"/><rect x="3.7" y="2.6" width="6.6" height="7.8"/><path d="M5.2 4.6 H8.8 M5.2 6.6 H8.8 M5.2 8.6 H8.8" stroke-width="1"/></g></svg>
<svg style="left:482px;top:564px" width="14" height="13" viewBox="0 0 14 13"><g fill="none" stroke="#6d6d6d" stroke-width="1.2"><rect x="0.6" y="0.6" width="12.8" height="11.8"/><path d="M0.6 7.4 H8.6 V0.6 M4.3 0.6 V7.4"/></g></svg>
<div class="a" style="left:514px;top:570px;width:8px;height:1px;background:#a0a0a0;"></div>
<div class="a" style="left:528px;top:571px;width:100px;height:1px;background:#444;"></div>
<div class="a" style="left:578px;top:568px;width:1px;height:7px;background:#444;"></div>
<svg style="left:633px;top:566px" width="8" height="9" viewBox="0 0 8 9"><path d="M4 0 V9 M0 4.5 H8" stroke="#a0a0a0" stroke-width="1"/></svg>
<div class="t" style="left:654px;top:566px;font-size:11px;color:#a0a0a0;">100%</div>
</body></html>
